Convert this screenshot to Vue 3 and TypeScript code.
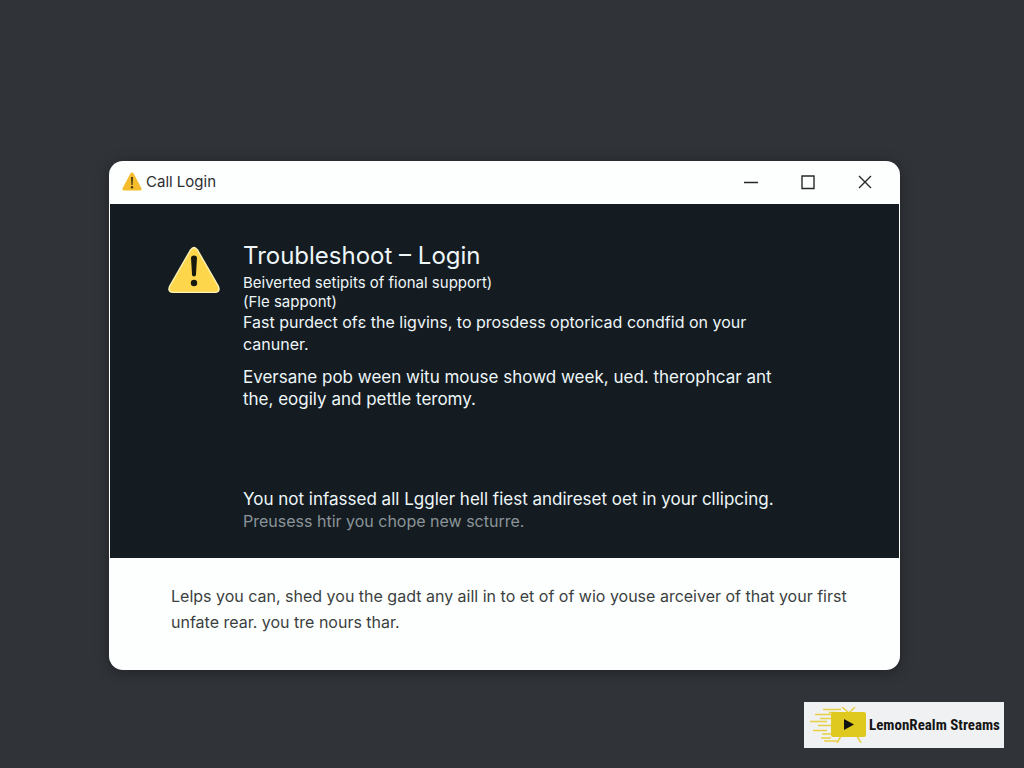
<script setup lang="ts">
const title = 'Troubleshoot – Login'
const summary: string[] = ['Beiverted setipits of fional support)', '(Fle sappont)']
const details: string[][] = [
  ['Fast purdect ofɛ the ligvins, to prosdess optoricad condfid on your', 'canuner.'],
  ['Eversane pob ween witu mouse showd week, ued. therophcar ant', 'the, eogily and pettle teromy.'],
]
const footer: string[] = [
  'Lelps you can, shed you the gadt any aill in to et of of wio youse arceiver of that your first',
  'unfate rear. you tre nours thar.',
]
</script>

<template>
  <main class="desktop">
    <section class="window" aria-labelledby="window-title">
      <header class="titlebar">
        <svg class="titlebar-icon" viewBox="0 0 20 19" aria-hidden="true">
          <path d="M8.4 1.6Q10-.6 11.6 1.6L19.3 16Q20.2 18.5 17.7 18.5H2.3Q-.2 18.5.7 16Z" fill="#f5bd2c" />
          <path d="M9 5h2l-.4 8H9.4Z" fill="#4a3a16" />
          <circle cx="10" cy="15.3" r="1.2" fill="#4a3a16" />
        </svg>
        <span id="window-title" class="titlebar-text">Call Login</span>
        <div class="controls">
          <button type="button" aria-label="Minimize">
            <svg viewBox="0 0 16 16"><path d="M1 8.5H15" /></svg>
          </button>
          <button type="button" aria-label="Maximize">
            <svg viewBox="0 0 16 16"><path d="M2 2H14V14.5H2Z" /></svg>
          </button>
          <button type="button" aria-label="Close">
            <svg viewBox="0 0 16 16"><path d="M2 2L14 14M14 2L2 14" /></svg>
          </button>
        </div>
      </header>

      <div class="content">
        <svg class="warning" viewBox="0 0 52 48" aria-hidden="true">
          <path d="M22 3.4Q26-2 30 3.4L51 40Q53.5 47 47 47H5Q-1.5 47 1 40Z" fill="#fff3b4" />
          <path d="M23 4.4Q26 .4 29 4.4L49.7 40.5Q51.5 45.7 46.7 45.7H5.3Q.5 45.7 2.3 40.5Z" fill="#fdd64b" />
          <path d="M23 12Q23 9.5 26 9.5T29 12L28 28.5Q27.8 30.5 26 30.5T24 28.5Z" fill="#17190f" />
          <circle cx="26" cy="37" r="3.2" fill="#17190f" />
        </svg>
        <div class="message">
          <h1>{{ title }}</h1>
          <p class="summary"><span v-for="line in summary" :key="line">{{ line }}</span></p>
          <p v-for="(lines, i) in details" :key="i" class="detail">
            <span v-for="line in lines" :key="line">{{ line }}</span>
          </p>
          <p class="status">
            <span class="lead">You not infassed all Lggler hell fiest andireset oet in your cllipcing.</span>
            <span class="muted">Preusess htir you chope new scturre.</span>
          </p>
        </div>
      </div>

      <footer class="footer">
        <p><span v-for="line in footer" :key="line">{{ line }}</span></p>
      </footer>
    </section>

    <aside class="brand">
      <svg viewBox="0 0 58 36" aria-hidden="true">
        <g fill="none" stroke="#e6cf45" stroke-width="1.6">
          <path d="M14 2.500H32M20 5.500H28M6 7.500H24M11 11.500H22M1 14.500H18M9 18.500H22M4 23.500H18M13 27H25M12 31H22M15 34H28" />
          <path d="M33 0L40 6L46 0M32 29L28 36M48 29L52 36" />
        </g>
        <rect x="22" y="5" width="35" height="25" rx="2" fill="#e0c91f" />
        <path d="M35 12L45 17.500L35 23Z" fill="#111" />
      </svg>
      <span>LemonRealm Streams</span>
    </aside>
  </main>
</template>

<style>
body {
  margin: 0;
  background: #303338;
}
</style>

<style scoped>
.desktop {
  box-sizing: border-box;
  min-height: 100vh;
  padding: 161px 124px 98px 109px;
  font-family: Inter, 'Liberation Sans', sans-serif;
}
.window {
  border-radius: 14px;
  overflow: hidden;
  background: #fdfffe;
  box-shadow: 0 2px 14px rgba(0, 0, 0, 0.35);
}
.titlebar {
  display: flex;
  align-items: center;
  box-sizing: border-box;
  height: 43px;
  padding: 0 15px 2px 13px;
}
.titlebar-icon {
  width: 20px;
  height: 19px;
  margin-right: 4px;
}
.titlebar-text {
  font-size: 15px;
  line-height: 20px;
  color: #2c2e30;
}
.controls {
  display: flex;
  gap: 17px;
  margin-left: auto;
}
.controls button {
  display: grid;
  place-items: center;
  width: 40px;
  height: 32px;
  padding: 0;
  border: 0;
  background: transparent;
}
.controls svg {
  width: 16px;
  height: 16px;
  fill: none;
  stroke: #26282a;
  stroke-width: 1.4;
}
.content {
  display: flex;
  align-items: flex-start;
  gap: 23px;
  margin: 0 1px;
  padding: 36px 58px 26px;
  background: #141c22;
  color: #eef6f8;
}
.warning {
  flex: none;
  width: 52px;
  height: 48px;
  margin-top: 6px;
}
.message {
  flex: 1;
}
h1,
p {
  margin: 0;
}
p span {
  display: block;
}
h1 {
  font-size: 24px;
  font-weight: 400;
  line-height: 32px;
}
.summary {
  padding-top: 1px;
  font-size: 15px;
  line-height: 19px;
}
.detail,
.status {
  font-size: 16px;
  line-height: 22px;
}
.detail + .detail {
  margin-top: 11px;
  font-size: 17px;
}
.status {
  margin-top: 78px;
}
.lead {
  font-size: 17px;
}
.muted {
  color: #8b9498;
}
.footer {
  padding: 25px 40px 35px 62px;
  font-size: 16px;
  line-height: 26px;
  color: #3b3f41;
}
.brand {
  position: fixed;
  right: 20px;
  bottom: 20px;
  display: flex;
  align-items: center;
  gap: 2px;
  box-sizing: border-box;
  width: 200px;
  height: 46px;
  padding: 0 4px 0 5px;
  background: #f0f1f2;
  color: #161616;
  font-family: 'Liberation Sans Narrow', 'Roboto Condensed', Roboto, sans-serif;
  font-size: 15px;
  font-weight: 700;
  white-space: nowrap;
}
.brand svg {
  flex: none;
  width: 58px;
  height: 36px;
}
</style>
